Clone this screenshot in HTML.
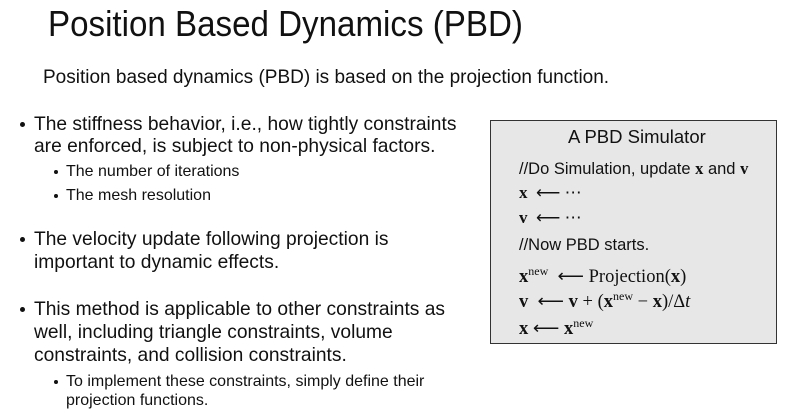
<!DOCTYPE html>
<html><head><meta charset="utf-8"><style>
body{margin:0;width:796px;height:420px;background:#fff;position:relative;overflow:hidden;font-family:"Liberation Sans",sans-serif;color:#111}
.t{position:absolute;white-space:nowrap;transform-origin:left center;transform:scaleX(1);line-height:1}
.bl{transform:scaleX(.985)}
.m{font-family:"Liberation Serif",serif;transform:none}
.b{font-weight:bold}
.dot{position:absolute;border-radius:50%;background:#111}
#box{position:absolute;left:490px;top:120px;width:285px;height:222px;background:#e7e7e7;border:1px solid #333}
</style></head><body>
<div class="t" style="left:48px;top:6px;font-size:36px;transform:scaleX(.92)">Position Based Dynamics (PBD)</div>
<div class="t" style="left:43px;top:68px;font-size:19px">Position based dynamics (PBD) is based on the projection function.</div>

<div class="dot" style="left:20px;top:122px;width:5px;height:5px"></div>
<div class="t bl" style="left:34px;top:115px;font-size:19.5px">The stiffness behavior, i.e., how tightly constraints</div>
<div class="t bl" style="left:34px;top:137px;font-size:19.5px">are enforced, is subject to non-physical factors.</div>
<div class="dot" style="left:54px;top:170px;width:4px;height:4px"></div>
<div class="t" style="left:66px;top:164px;font-size:16px">The number of iterations</div>
<div class="dot" style="left:54px;top:194px;width:4px;height:4px"></div>
<div class="t" style="left:66px;top:188px;font-size:16px">The mesh resolution</div>

<div class="dot" style="left:20px;top:237px;width:5px;height:5px"></div>
<div class="t bl" style="left:34px;top:230px;font-size:19.5px">The velocity update following projection is</div>
<div class="t bl" style="left:34px;top:253px;font-size:19.5px">important to dynamic effects.</div>

<div class="dot" style="left:20px;top:307px;width:5px;height:5px"></div>
<div class="t bl" style="left:34px;top:300px;font-size:19.5px">This method is applicable to other constraints as</div>
<div class="t bl" style="left:34px;top:323px;font-size:19.5px">well, including triangle constraints, volume</div>
<div class="t bl" style="left:34px;top:346px;font-size:19.5px">constraints, and collision constraints.</div>
<div class="dot" style="left:54px;top:380px;width:4px;height:4px"></div>
<div class="t" style="left:66px;top:374px;font-size:16px">To implement these constraints, simply define their</div>
<div class="t" style="left:66px;top:393px;font-size:16px">projection functions.</div>

<div id="box"></div>
<div class="t" style="left:568px;top:128px;font-size:18.5px">A PBD Simulator</div>
<div class="t" style="left:519px;top:161px;font-size:16.5px">//Do Simulation, update <span class="b" style="font-family:'Liberation Serif',serif">x</span> and <span class="b" style="font-family:'Liberation Serif',serif">v</span></div>
<div class="t m" style="left:519px;top:184px;font-size:17px"><b>x</b> &nbsp;⟵ ⋯</div>
<div class="t m" style="left:519px;top:209px;font-size:17px"><b>v</b> &nbsp;⟵ ⋯</div>
<div class="t" style="left:519px;top:237px;font-size:16.5px">//Now PBD starts.</div>
<div class="t m" style="left:519px;top:265px;font-size:18.5px"><b>x</b><sup style="font-size:12px">new</sup> &nbsp;⟵ Projection(<b>x</b>)</div>
<div class="t m" style="left:519px;top:290px;font-size:18.5px"><b>v</b> &nbsp;⟵ <b>v</b> + (<b>x</b><sup style="font-size:12px">new</sup> − <b>x</b>)/Δ<i>t</i></div>
<div class="t m" style="left:519px;top:317px;font-size:18.5px"><b>x</b> ⟵ <b>x</b><sup style="font-size:12px">new</sup></div>
</body></html>
